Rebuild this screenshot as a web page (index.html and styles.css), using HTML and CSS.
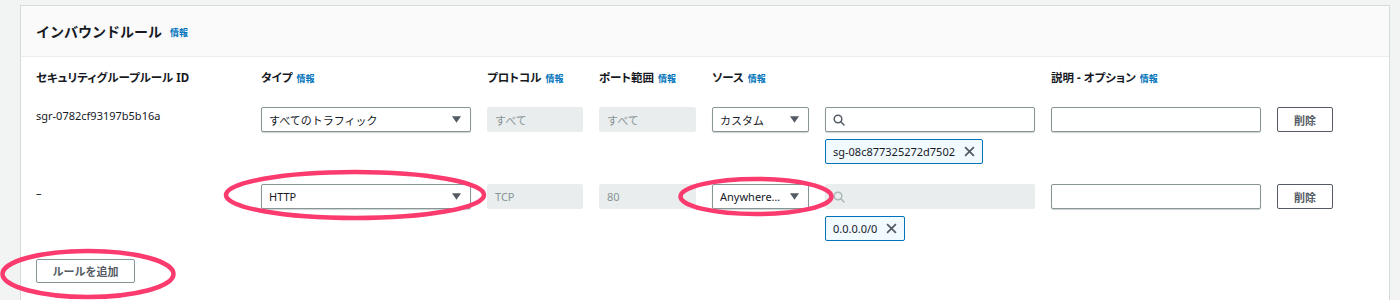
FILE: index.html
```html
<!DOCTYPE html>
<html lang="ja">
<head>
  <meta charset="UTF-8">
  <title>インバウンドルール</title>
  <link rel="stylesheet" href="styles.css">
</head>
<body>
  <div class="page">
    <section class="panel">
      <div class="panel-header">
        <h2>インバウンドルール</h2><a class="info">情報</a>
      </div>
      <div class="panel-body">
        <!-- Column labels -->
        <div class="cols labels">
          <div>セキュリティグループルール ID</div>
          <div>タイプ<a class="info">情報</a></div>
          <div>プロトコル<a class="info">情報</a></div>
          <div>ポート範囲<a class="info">情報</a></div>
          <div>ソース<a class="info">情報</a></div>
          <div></div>
          <div>説明 - オプション<a class="info">情報</a></div>
          <div></div>
        </div>

        <!-- Existing rule -->
        <div class="cols rule">
          <div class="rule-id">sgr-0782cf93197b5b16a</div>
          <div class="select"><span>すべてのトラフィック</span><svg class="caret" viewBox="0 0 10 7"><path d="M0 0h10L5 7z"/></svg></div>
          <div class="field disabled">すべて</div>
          <div class="field disabled">すべて</div>
          <div class="select"><span>カスタム</span><svg class="caret" viewBox="0 0 10 7"><path d="M0 0h10L5 7z"/></svg></div>
          <div class="source">
            <div class="field search"><svg class="lens" viewBox="0 0 12 12"><circle cx="5" cy="5" r="3.8"/><path d="M7.8 7.8L11 11"/></svg></div>
            <div class="token">sg-08c877325272d7502<svg class="close" viewBox="0 0 10 10"><path d="M1 1l8 8M9 1l-8 8"/></svg></div>
          </div>
          <div class="field"></div>
          <button class="btn">削除</button>
        </div>

        <!-- New rule -->
        <div class="cols rule">
          <div class="rule-id">–</div>
          <div class="select"><span>HTTP</span><svg class="caret" viewBox="0 0 10 7"><path d="M0 0h10L5 7z"/></svg></div>
          <div class="field disabled">TCP</div>
          <div class="field disabled">80</div>
          <div class="select"><span>Anywhere…</span><svg class="caret" viewBox="0 0 10 7"><path d="M0 0h10L5 7z"/></svg></div>
          <div class="source">
            <div class="field search disabled"><svg class="lens" viewBox="0 0 12 12"><circle cx="5" cy="5" r="3.8"/><path d="M7.8 7.8L11 11"/></svg></div>
            <div class="token">0.0.0.0/0<svg class="close" viewBox="0 0 10 10"><path d="M1 1l8 8M9 1l-8 8"/></svg></div>
          </div>
          <div class="field"></div>
          <button class="btn">削除</button>
        </div>

        <button class="btn add">ルールを追加</button>
      </div>
    </section>

    <!-- Hand-drawn highlight marks -->
    <svg class="marks" viewBox="0 0 1400 300">
      <ellipse cx="355" cy="195" rx="129" ry="23"/>
      <ellipse cx="756" cy="196.5" rx="75.5" ry="17.5"/>
      <ellipse cx="88" cy="274" rx="85.5" ry="23"/>
    </svg>
  </div>
</body>
</html>
```

FILE: styles.css
```css
html, body {
  margin: 0;
  height: 300px;
  overflow: hidden;
}

body {
  font-family: "Noto Sans", "Noto Sans CJK JP", sans-serif;
  font-size: 11px;
  color: #16191f;
  background-color: #f2f3f3;
}

.page {
  position: relative;
  padding: 5px 10px 0 20px;
}

/* Panel */
.panel {
  box-sizing: border-box;
  height: 295px;
  background-color: #fff;
  border: 1px solid #d5dbdb;
  border-bottom: none;
}

.panel-header {
  display: flex;
  align-items: center;
  height: 50px;
  padding: 0 15px;
  background-color: #fafafa;
  border-bottom: 1px solid #eaeded;
}

.panel-header h2 {
  margin: 0;
  font-size: 14px;
  font-weight: bold;
}

.panel-header .info {
  margin-left: 8px;
  margin-top: 2px;
}

.info {
  color: #0073bb;
  font-size: 9px;
  font-weight: bold;
  margin-left: 4px;
}

.panel-body {
  padding: 13px 15px 0;
}

/* Shared column grid */
.cols {
  display: grid;
  grid-template-columns: 209px 210px 96px 97px 97px 210px 210px 56px;
  column-gap: 16px;
  align-items: start;
}

.labels {
  font-size: 11.5px;
  font-weight: bold;
  line-height: 16px;
  margin-bottom: 20px;
  font-feature-settings: "palt";
}

.rule {
  margin-bottom: 20px;
}

.rule:last-of-type {
  margin-bottom: 18px;
}

.rule-id {
  line-height: 16px;
  padding-top: 1px;
}

/* Controls */
.select,
.field {
  box-sizing: border-box;
  height: 25px;
  border: 1px solid #879596;
  border-radius: 2px;
  box-shadow: 0 1px 1px rgba(0, 28, 36, 0.2);
  background-color: #fff;
  display: flex;
  align-items: center;
  padding: 0 7px;
}

.select {
  justify-content: space-between;
  padding-right: 9px;
}

.select span {
  white-space: nowrap;
  overflow: hidden;
}

.caret {
  width: 9px;
  height: 7px;
  fill: #545b64;
  flex-shrink: 0;
}

.field.disabled {
  border-color: #eaeded;
  background-color: #eaeded;
  box-shadow: none;
  color: #879596;
}

.source {
  display: flex;
  flex-direction: column;
  align-items: flex-start;
  gap: 7px;
}

.search {
  width: 100%;
}

.lens {
  width: 12px;
  height: 12px;
  fill: none;
  stroke: #545b64;
  stroke-width: 1.5;
  stroke-linecap: round;
}

.search.disabled .lens {
  stroke: #aab7b8;
}

.token {
  box-sizing: border-box;
  height: 25px;
  display: flex;
  align-items: center;
  gap: 9px;
  padding: 0 7px;
  background-color: #f1faff;
  border: 1px solid #0073bb;
  border-radius: 2px;
}

.close {
  width: 11px;
  height: 11px;
  fill: none;
  stroke: #545b64;
  stroke-width: 1.6;
}

/* Buttons */
.btn {
  box-sizing: border-box;
  height: 25px;
  padding: 0;
  font-family: inherit;
  font-size: 11px;
  font-weight: bold;
  color: #545b64;
  background-color: #fff;
  border: 1px solid #545b64;
  border-radius: 2px;
}

.btn.add {
  width: 99px;
  height: 24px;
  border-color: #879596;
}

/* Annotation overlay */
.marks {
  position: absolute;
  left: 0;
  top: 0;
  width: 1400px;
  height: 300px;
  pointer-events: none;
}

.marks ellipse {
  fill: none;
  stroke: #fb3a6e;
  stroke-width: 4.5;
}
```
